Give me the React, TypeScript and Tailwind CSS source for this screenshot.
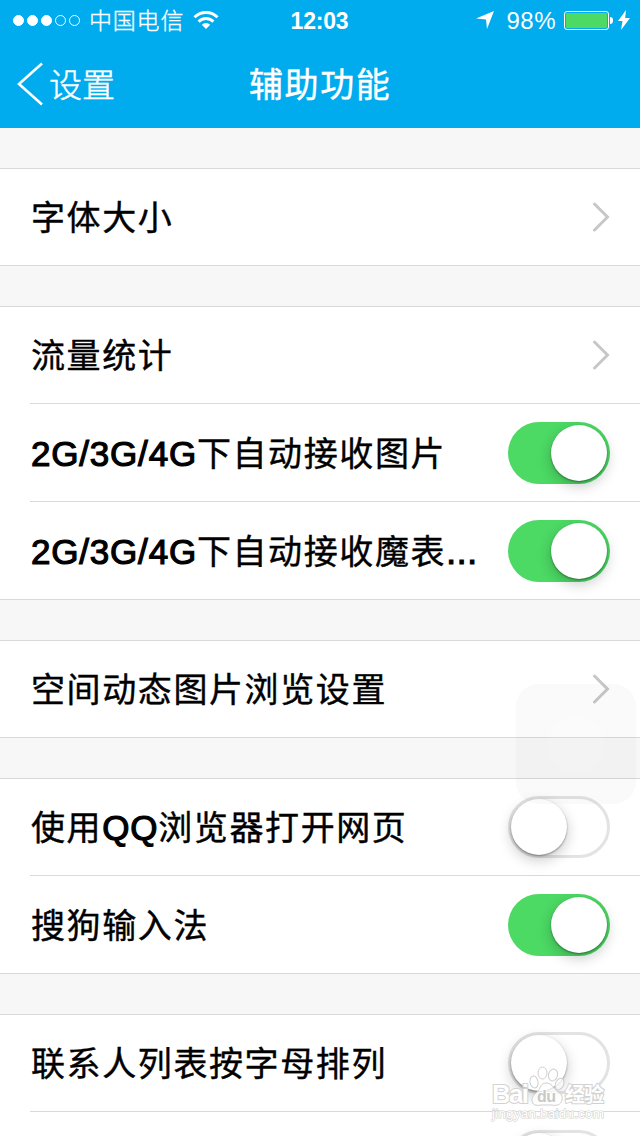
import React from 'react';
import clsx from 'clsx';

type Item = { label: string; on?: boolean };

// Items without an "on" value open another page and get a chevron
const groups: Item[][] = [
  [{ label: '字体大小' }],
  [
    { label: '流量统计' },
    { label: '2G/3G/4G下自动接收图片', on: true },
    { label: '2G/3G/4G下自动接收魔表...', on: true },
  ],
  [{ label: '空间动态图片浏览设置' }],
  [
    { label: '使用QQ浏览器打开网页', on: false },
    { label: '搜狗输入法', on: true },
  ],
  [
    { label: '联系人列表按字母排列', on: false },
    { label: '', on: false },
  ],
];

const StatusBar: React.FC = () => (
  <div className="flex h-10 items-center justify-between pl-[13px] pr-[10px]">
    <div className="flex w-[260px] items-center">
      <div className="flex gap-[3px]">
        {[1, 2, 3, 4, 5].map((n) => (
          <span key={n} className={clsx('size-[11px] rounded-full border border-white', n <= 3 && 'bg-white')} />
        ))}
      </div>
      <span className="ml-[9px] pt-px text-[23px] font-light leading-10 tracking-[0.8px] [-webkit-text-stroke:0.3px_#fff]">
        中国电信
      </span>
      <svg className="ml-[9px]" width="26" height="20" viewBox="0 0 26 20" fill="none" stroke="#fff" strokeWidth="3">
        <path d="M1.5 7.200a16.300 16.300 0 0 1 23 0" />
        <path d="M5.600 11.600a10.400 10.400 0 0 1 14.800 0" />
        <path d="M13 19l-4.200-4.200a6 6 0 0 1 8.400 0z" fill="#fff" stroke="none" />
      </svg>
    </div>
    <span className="mr-[4px] pt-px text-[23px] font-bold leading-10 tracking-[-0.2px]">12:03</span>
    <div className="flex w-[260px] items-center justify-end">
      <svg width="18" height="18" viewBox="0 0 18 18" fill="#fff">
        <path d="M18 0L11 18 10 8.600 0 7.500z" />
      </svg>
      <span className="ml-[12px] pt-px text-[24px] leading-10 tracking-[0.5px]">98%</span>
      <div className="ml-[8px] h-[19px] w-[45px] rounded-[3px] border border-white p-px">
        <div className="h-full w-[41px] rounded-[1px] bg-[#4cd964]" />
      </div>
      <span className="ml-px h-[7px] w-[3px] rounded-r-full bg-white" />
      <svg className="ml-[5px]" width="12" height="20" viewBox="0 0 12 20" fill="#fff">
        <path d="M8 0L0 11h4.500L3 20l9-12H7.200z" />
      </svg>
    </div>
  </div>
);

const Header: React.FC = () => (
  <header className="h-32 bg-[#00abee] text-white">
    <StatusBar />
    <div className="flex h-[88px] items-center">
      <div className="flex w-[249px] items-center pl-[17px]">
        <svg width="26" height="44" viewBox="0 0 26 44" fill="none" stroke="#fff" strokeWidth="2.6">
          <path d="M25 1.500L2 22l23 20.500" />
        </svg>
        <span className="ml-[6px] pt-[3px] text-[33px] font-light leading-[85px] [-webkit-text-stroke:0.5px_#fff]">
          设置
        </span>
      </div>
      <h1 className="pt-[3px] text-[34px] leading-[85px] tracking-[1.6px] [-webkit-text-stroke:0.4px_#fff]">辅助功能</h1>
    </div>
  </header>
);

const Switch: React.FC<{ on: boolean }> = ({ on }) => (
  <div
    className={clsx(
      'flex h-[62px] w-[102px] shrink-0 items-center rounded-full',
      on ? 'justify-end bg-[#4cd964] pr-[3px]' : 'border-[3px] border-[#e3e3e3] bg-white',
    )}
  >
    <div className="size-[56px] rounded-full bg-white shadow-[0_1px_2px_rgba(0,0,0,0.4),0_5px_14px_rgba(0,0,0,0.22)]" />
  </div>
);

const Chevron: React.FC = () => (
  <svg width="18" height="30" viewBox="0 0 18 30" fill="none" stroke="#c7c7c7" strokeWidth="3" strokeLinecap="round">
    <path d="M2.500 2L15.500 15 2.500 28" />
  </svg>
);

// Latin runs are drawn larger and a little heavier than the Chinese glyphs
const Label: React.FC<{ text: string }> = ({ text }) => (
  <span className="ml-px whitespace-nowrap pt-[2px] text-[34px] leading-[90px] tracking-[1.6px] [-webkit-text-stroke:0.4px_#000]">
    {text.split(/([A-Z0-9/.]+)/).map((part, i) =>
      i % 2 ? (
        <span key={i} className="text-[35px] tracking-[0.8px] [-webkit-text-stroke:1.2px_#000]">{part}</span>
      ) : (
        part
      ),
    )}
  </span>
);

const Row: React.FC<{ item: Item; first: boolean; last: boolean }> = ({ item, first, last }) => (
  <div
    className={clsx(
      'flex shrink-0 items-center justify-between border-b border-[#d9d9d9] pr-[30px]',
      first ? 'h-[97px]' : 'h-[98px] pt-px',
      last ? 'pl-[30px]' : 'ml-[30px]',
    )}
  >
    <Label text={item.label} />
    {item.on === undefined ? <Chevron /> : <Switch on={item.on} />}
  </div>
);

const AssistiveTouch: React.FC = () => (
  <div className="absolute left-[516px] top-[684px] flex size-[120px] items-center justify-center rounded-[22px] bg-black/[0.018]">
    <div className="size-[58px] rounded-full bg-white/10" />
  </div>
);

const Watermark: React.FC = () => (
  <svg className="absolute left-[486px] top-[1060px]" width="124" height="68" viewBox="0 0 124 68">
    <g fill="#fff" fillOpacity="0.75" stroke="#cfcfcf" strokeWidth="1">
      <ellipse cx="56.500" cy="13" rx="4.500" ry="6" />
      <ellipse cx="67" cy="15" rx="4.500" ry="6" transform="rotate(15 67 15)" />
      <ellipse cx="48" cy="22" rx="4" ry="6" transform="rotate(-10 48 22)" />
      <ellipse cx="73.500" cy="24" rx="4" ry="6" transform="rotate(25 73.500 24)" />
      <path d="M60 23c6 0 7 5 11 8 4 3 6 5 5 9-1 5-6 6-10 5h-11c-5 1-9 0-9-5 0-4 3-6 6-9 3-4 3-8 8-8z" />
    </g>
    <g fill="#fff" stroke="#d2d2d2" strokeWidth="2" paintOrder="stroke" fontWeight="bold">
      <text x="6" y="43" fontSize="26" textLength="37">Bai</text>
      <text x="51" y="42" fontSize="16" textLength="19" fill="#c8c8c8" stroke="#fff">du</text>
      <text x="79" y="42" fontSize="20" textLength="39">经验</text>
      <text x="6" y="58" fontSize="13.500" textLength="112" strokeWidth="1.200" fontWeight="normal">jingyan.baidu.com</text>
    </g>
  </svg>
);

const App: React.FC = () => (
  <div className="relative flex h-[1136px] w-[640px] flex-col overflow-hidden bg-[#f7f7f7] font-['Liberation_Sans','Noto_Sans_CJK_SC',sans-serif] text-black">
    <Header />
    {groups.map((items, g) => (
      <section key={g} className="mt-10 shrink-0 border-t border-[#d9d9d9] bg-white">
        {items.map((item, i) => (
          <Row key={i} item={item} first={i === 0} last={i === items.length - 1} />
        ))}
      </section>
    ))}
    <AssistiveTouch />
    <Watermark />
  </div>
);

export default App;
